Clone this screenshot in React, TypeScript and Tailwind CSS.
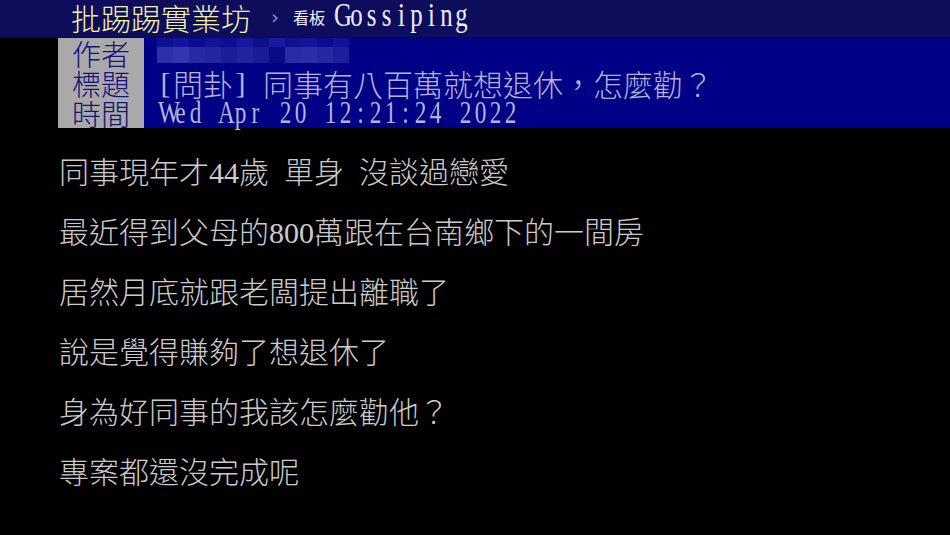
const cjk = '"Noto Sans CJK TC", sans-serif';
const serif = '"Liberation Serif", serif';

// serif latin set on a fixed 15px grid, glyphs condensed like the terminal font
const SerifMono = ({ text, size }: { text: string; size: string }) => (
  <span
    className={`inline-block whitespace-nowrap scale-x-[0.75] origin-left ${size}`}
    style={{ fontFamily: serif }}
  >
    {text.split("").map((c, i) => (
      <span key={i} className="inline-block w-[20px] text-center">
        {c === " " ? "\u00a0" : c}
      </span>
    ))}
  </span>
);

const Half = ({ children }: { children: React.ReactNode }) => (
  <span className="inline-block w-[15px] text-center text-[30px]" style={{ fontFamily: serif }}>
    {children}
  </span>
);

const HeaderRow = ({ label, children }: { label: string; children: React.ReactNode }) => (
  <div className="flex h-[30px] items-center">
    <div className="w-[58px] h-full bg-black" />
    <div className="w-[86px] h-full bg-[#a9a9a9] text-[#14147c] text-[29px] leading-[30px] text-center font-light">
      {label}
    </div>
    <div className="flex-1 h-full pl-[14px] text-[#b4b4d6] text-[30px] leading-[30px] whitespace-pre flex items-center font-light">
      {children}
    </div>
  </div>
);

const Mosaic = () => {
  const top = ["#101092", "#14149a", "#0c0c90", "#121296", "#0e0e92", "#18189c", "#10108f", "#1a1a9e", "#101090", "#141498", "#0c0c8e", "#121294"];
  const bottom = ["#2e2ea8", "#3434ae", "#2828a2", "#2424a0", "#1c1c98", "#22229e", "#1a1a96", "#0a0a86", "#2a2aa6", "#2c2ca8", "#2626a2", "#1e1e9a"];
  return (
    <div className="flex flex-col">
      <div className="flex">
        {top.map((c, i) => (
          <div key={i} className="w-[16px] h-[9px]" style={{ background: c }} />
        ))}
      </div>
      <div className="flex">
        {bottom.map((c, i) => (
          <div key={i} className="w-[16px] h-[16px]" style={{ background: c }} />
        ))}
      </div>
    </div>
  );
};

const lines = [
  "同事現年才44歲  單身  沒談過戀愛",
  "最近得到父母的800萬跟在台南鄉下的一間房",
  "居然月底就跟老闆提出離職了",
  "說是覺得賺夠了想退休了",
  "身為好同事的我該怎麼勸他？",
  "專案都還沒完成呢",
];

export default function App() {
  return (
    <div className="w-[950px] h-[535px] bg-black overflow-hidden" style={{ fontFamily: cjk }}>
      <div className="h-[37px] bg-[#0d0d5c] flex items-center pl-[71px] pb-[4px]">
        <span className="text-[#f2f2a4] text-[30px] leading-[32px] font-light">批踢踢實業坊</span>
        <span className="text-[#8a8ac8] text-[20px] ml-[20px] mr-[14px]" style={{ fontFamily: '"DejaVu Sans", sans-serif' }}>›</span>
        <span className="text-[#f0f0ff] text-[16px]">看板</span>
        <span className="text-[#eeeeff] leading-[34px] ml-[9px]">
          <SerifMono text="Gossiping" size="text-[33px]" />
        </span>
      </div>
      <div className="bg-[#000086] pt-[1px]">
        <HeaderRow label="作者">
          <div className="self-start -ml-[1px]">
            <Mosaic />
          </div>
        </HeaderRow>
        <HeaderRow label="標題">
          <Half>[</Half>
          <span>問卦</span>
          <Half>]</Half>
          <Half> </Half>
          <span>同事有八百萬就想退休，怎麼勸？</span>
        </HeaderRow>
        <HeaderRow label="時間">
          <SerifMono text="Wed Apr 20 12:21:24 2022" size="text-[31px]" />
        </HeaderRow>
      </div>
      <div
        className="pt-[15px] pl-[59px] text-[#cbcbcb] text-[30px] leading-[60px] whitespace-pre font-light"
        style={{ fontFamily: '"Liberation Serif", "Noto Sans CJK TC", serif' }}
      >
        {lines.map((l, i) => (
          <div key={i}>{l}</div>
        ))}
      </div>
    </div>
  );
}
